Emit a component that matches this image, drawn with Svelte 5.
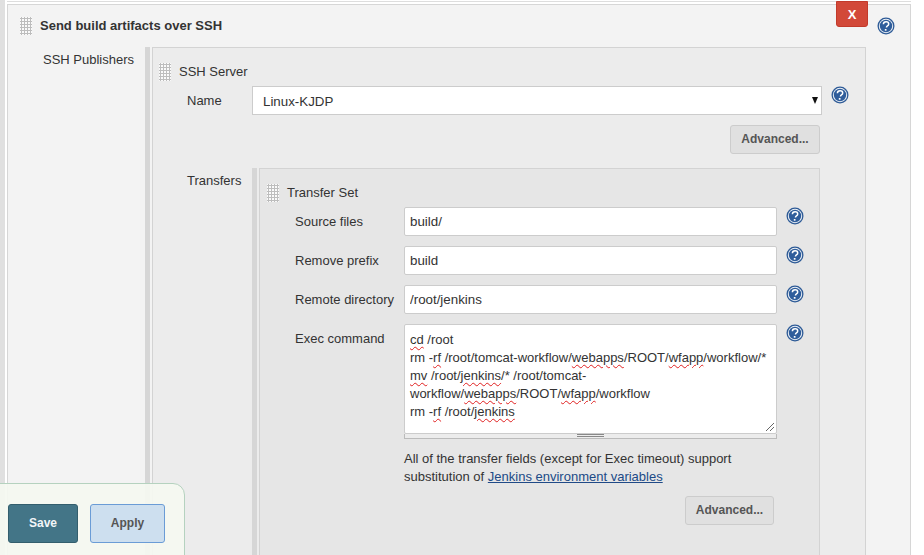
<script>
	let rows = [
		{ label: "Source files", value: "build/" },
		{ label: "Remove prefix", value: "build" },
		{ label: "Remote directory", value: "/root/jenkins" },
	]
</script>

{#snippet help()}
	<svg class="help" viewBox="0 0 18 18" width="18" height="18" aria-hidden="true">
		<circle cx="9" cy="9" r="8.5" fill="#2d5a96" />
		<circle cx="9" cy="9" r="7.2" fill="#eef2f7" />
		<circle cx="9" cy="9" r="6.2" fill="#2f5d9b" />
		<path d="M6.4 7.2c0-1.6 1.2-2.5 2.7-2.5s2.6.9 2.6 2.2c0 1-.6 1.5-1.3 2-.6.4-.9.7-.9 1.4v.3" fill="none" stroke="#fff" stroke-width="1.5" />
		<rect x="7.8" y="12" width="1.7" height="1.7" fill="#fff" />
	</svg>
{/snippet}

<div class="page">
	<div class="prev"></div>
	<div class="block">
		<div class="title">
			<span class="handle"></span>
			<b>Send build artifacts over SSH</b>
		</div>
		<button class="delete">X</button>
		<span class="blockHelp">{@render help()}</span>

		<div class="publishers">
			<div class="publishersLabel">SSH Publishers</div>
			<div class="bar"></div>
			<div class="panel server">
				<div class="heading">
					<span class="handle"></span>SSH Server
				</div>
				<div class="nameRow">
					<span class="nameLabel">Name</span>
					<div class="selectWrap">
						<select class="select">
							<option>Linux-KJDP</option>
						</select>
					</div>
					{@render help()}
				</div>
				<div class="advancedRow">
					<button class="advanced">Advanced...</button>
				</div>
				<div class="transfers">
					<div class="nameLabel transfersLabel">Transfers</div>
					<div class="bar"></div>
					<div class="panel set">
						<div class="heading setHeading">
							<span class="handle"></span>Transfer Set
						</div>
						{#each rows as row (row.label)}
							<div class="field">
								<span class="fieldLabel">{row.label}</span>
								<input type="text" value={row.value} spellcheck="false" />
								{@render help()}
							</div>
						{/each}
						<div class="field">
							<span class="fieldLabel">Exec command</span>
							<div class="execWrap">
								<div class="exec">
									<span class="sp">cd</span> /root<br />
									rm -<span class="sp">rf</span> /root/tomcat-workflow/<span class="sp">webapps</span>/ROOT/<span class="sp">wfapp</span>/workflow/*<br />
									<span class="sp">mv</span> /root/<span class="sp">jenkins</span>/* /root/tomcat-<br />
									workflow/<span class="sp">webapps</span>/ROOT/<span class="sp">wfapp</span>/workflow<br />
									rm -<span class="sp">rf</span> /root/<span class="sp">jenkins</span>
									<svg class="resize" viewBox="0 0 10 10" width="10" height="10" aria-hidden="true">
										<path d="M1 9 9 1M5 9 9 5" stroke="#666" stroke-width="1" fill="none" />
									</svg>
								</div>
								<div class="grip"><span></span></div>
							</div>
							{@render help()}
						</div>
						<p class="note">
							All of the transfer fields (except for Exec timeout) support substitution of
							<a href="#env">Jenkins environment variables</a>
						</p>
						<div class="setAdvanced">
							<button class="advanced">Advanced...</button>
						</div>
					</div>
				</div>
			</div>
		</div>
	</div>

	<div class="saveBar">
		<button class="save">Save</button>
		<button class="apply">Apply</button>
	</div>
</div>

<style>
	:global(body) {
		background: #fff;
	}

	.page {
		position: relative;
		height: 555px;
		overflow: hidden;
		padding-left: 7px;
		box-sizing: border-box;
		font-family: "Liberation Sans", Arial, sans-serif;
		font-size: 13px;
		color: #333;
		background: linear-gradient(to right, #e0e0e0 5px, #fff 5px);
	}

	button {
		font-family: inherit;
		cursor: pointer;
	}

	.prev {
		height: 1px;
		border-bottom: 1px solid #ddd;
		margin-right: 13px;
		margin-bottom: 2px;
	}

	.block {
		position: relative;
		width: 904px;
		box-sizing: border-box;
		height: 700px;
		background: #f3f3f3;
		border: 1px solid #d6d6d6;
		padding: 12px 0 0 0;
	}

	.title {
		display: flex;
		align-items: center;
		gap: 8px;
		padding-left: 12px;
		height: 18px;
		margin-bottom: 12px;
	}

	.title b {
		font-size: 13px;
		color: #333;
		margin-bottom: 2px;
	}

	.handle {
		display: inline-block;
		width: 12px;
		height: 18px;
		flex: none;
		background-color: #fafafa;
		background-image: radial-gradient(circle at 1.5px 1.5px, #bdbdbd 1px, transparent 1.2px);
		background-size: 3px 3px;
	}

	.delete {
		position: absolute;
		top: -4px;
		left: 828px;
		width: 32px;
		height: 26px;
		background: #d24939;
		border: 1px solid #c23a2b;
		border-radius: 0 0 3px 3px;
		color: #fff;
		font-size: 13px;
		font-weight: bold;
		padding: 0;
	}

	.blockHelp {
		position: absolute;
		left: 869px;
		top: 12px;
		line-height: 0;
	}

	.help {
		flex: none;
		display: block;
	}

	.publishers {
		display: flex;
	}

	.publishersLabel {
		width: 137px;
		flex: none;
		padding: 5px 0 0 35px;
		box-sizing: border-box;
	}

	.bar {
		width: 5px;
		flex: none;
		background: #d6d6d6;
		margin-right: 2px;
	}

	.panel {
		border: 1px solid #d3d3d3;
		box-sizing: border-box;
	}

	.server {
		width: 714px;
		background: #ececec;
		padding: 15px 0 0 6px;
	}

	.heading {
		display: flex;
		align-items: center;
		gap: 8px;
		height: 18px;
		line-height: 16px;
	}

	.nameRow {
		display: flex;
		align-items: flex-start;
		margin-top: 5px;
	}

	.nameLabel {
		width: 65px;
		flex: none;
		margin-left: 28px;
		padding-top: 7px;
	}

	.selectWrap {
		position: relative;
		width: 570px;
		margin-right: 9px;
	}

	.selectWrap::after {
		content: "";
		position: absolute;
		right: 4px;
		top: 11px;
		border-left: 3.5px solid transparent;
		border-right: 3.5px solid transparent;
		border-top: 7px solid #111;
		pointer-events: none;
	}

	.select {
		display: block;
		appearance: none;
		width: 100%;
		height: 29px;
		background: #fff;
		border: 1px solid #ccc;
		border-radius: 0;
		font-family: inherit;
		font-size: 13.33px;
		padding: 1px 10px 0;
		color: #333;
		margin: 0;
	}

	.advancedRow {
		display: flex;
		justify-content: flex-end;
		margin: 10px 45px 0 0;
	}

	.advanced {
		width: 90px;
		height: 29px;
		background: #e0e0e0;
		border: 1px solid #ccc;
		border-radius: 3px;
		color: #555;
		font-size: 12px;
		font-weight: bold;
		padding: 0 0 2px;
	}

	.transfers {
		display: flex;
		margin-top: 14px;
	}

	.transfersLabel {
		padding-top: 5px;
	}

	.set {
		width: 561px;
		height: 400px;
		background: #e6e6e6;
		padding: 15px 0 0 7px;
	}

	.setHeading {
		margin-bottom: 5px;
	}

	.field {
		display: flex;
		align-items: flex-start;
		margin-bottom: 10px;
	}

	.fieldLabel {
		width: 109px;
		flex: none;
		margin-left: 28px;
		padding-top: 7px;
	}

	input {
		width: 373px;
		height: 29px;
		box-sizing: border-box;
		border: 1px solid #ccc;
		border-radius: 2px;
		padding: 0 5px;
		font-family: inherit;
		font-size: 13.33px;
		color: #333;
		margin: 0 9px 0 0;
		outline: none;
	}

	.execWrap {
		width: 373px;
		flex: none;
		margin-right: 9px;
	}

	.exec {
		position: relative;
		height: 110px;
		box-sizing: border-box;
		background: #fff;
		border: 1px solid #ccc;
		border-radius: 2px;
		padding: 6px 5px;
		line-height: 18px;
		font-size: 13px;
		color: #333;
	}

	.sp {
		text-decoration: underline wavy #e02020 1px;
		text-underline-offset: 2px;
	}

	.resize {
		position: absolute;
		right: 1px;
		bottom: 1px;
	}

	.grip {
		height: 5px;
		background: #ececec;
		border: 1px solid #bbb;
		border-top: 0;
		box-sizing: border-box;
		display: flex;
		justify-content: center;
	}

	.grip span {
		width: 27px;
		height: 3px;
		border-top: 1px solid #888;
		border-bottom: 1px solid #888;
		box-sizing: border-box;
	}

	.note {
		margin: 0 0 0 137px;
		width: 350px;
		line-height: 18px;
		padding-top: 1px;
	}

	.note a {
		color: #204a87;
	}

	.setAdvanced {
		display: flex;
		justify-content: flex-end;
		margin: 10px 45px 0 0;
	}

	.setAdvanced .advanced {
		width: 89px;
	}

	.saveBar {
		position: absolute;
		left: -1px;
		bottom: -1px;
		width: 186px;
		height: 73px;
		box-sizing: border-box;
		background: rgba(245, 249, 241, 0.92);
		border: 1px solid #b5d2bf;
		border-top-right-radius: 12px;
		display: flex;
		gap: 12px;
		padding: 20px 0 0 8px;
	}

	.save, .apply {
		height: 39px;
		font-size: 12px;
		font-weight: bold;
		border-radius: 3px;
		padding: 0 0 2px;
	}

	.save {
		width: 70px;
		background: #437587;
		border: 1px solid #335e6d;
		color: #f2f6f8;
	}

	.apply {
		width: 75px;
		background: #cddfef;
		border: 1px solid #6a9cd6;
		color: #555;
	}
</style>
